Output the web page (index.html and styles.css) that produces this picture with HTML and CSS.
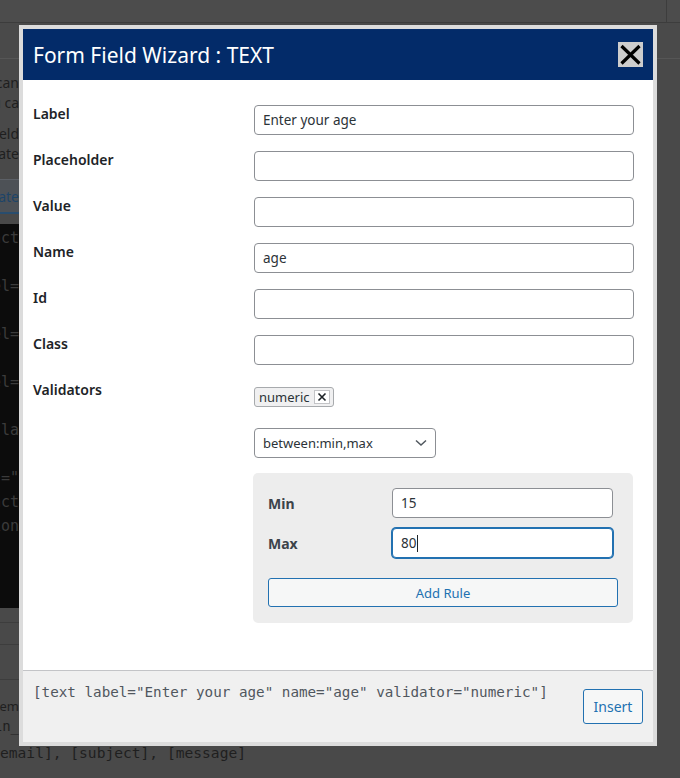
FILE: index.html
```html
<!DOCTYPE html>
<html lang="en">
<head>
<meta charset="utf-8">
<title>Form Field Wizard</title>
<link rel="stylesheet" href="styles.css">
</head>
<body>
<div class="page">
  <div class="bg-top"><div class="bg-corner"></div></div>
  <div class="bg-sub"></div>
  <div class="strip">
    <div class="s-gap g14"></div>
    <div class="s-line">Here you can</div>
    <div class="s-line">You ca</div>
    <div class="s-gap g11"></div>
    <div class="s-line">Field</div>
    <div class="s-line">Create</div>
    <div class="s-gap g15"></div>
    <div class="s-tab"><span>Create</span></div>
    <div class="s-gap g10"></div>
    <div class="s-code">
      <div class="c-line">[contact</div>
      <div class="c-line"></div>
      <div class="c-line">[text label=</div>
      <div class="c-line"></div>
      <div class="c-line">[email label=</div>
      <div class="c-line"></div>
      <div class="c-line">[text label=</div>
      <div class="c-line"></div>
      <div class="c-line">[textarea la</div>
      <div class="c-line"></div>
      <div class="c-line">[submit class="</div>
      <div class="c-line">[/contact</div>
      <div class="c-line">Submission</div>
    </div>
    <div class="s-gap g14 rule"></div>
    <div class="s-gap g21 rule"></div>
    <div class="s-gap g34 rule"></div>
    <div class="s-gap g16"></div>
    <div class="s-line small">Email item</div>
    <div class="s-line mono">admin_</div>
  </div>
  <div class="bg-bottom">email], [subject], [message]</div>
</div>

<div class="modal">
  <div class="m-header">
    <div class="m-title">Form Field Wizard : TEXT</div>
    <button class="m-close" type="button" aria-label="Close">
      <svg width="25" height="25" viewBox="0 0 25 25"><path d="M3.5 4 L21.5 21.5 M21.5 4 L3.5 21.5" stroke="#000" stroke-width="3.2" fill="none"/></svg>
    </button>
  </div>
  <div class="m-body">
    <div class="row"><div class="label">Label</div><input class="field" type="text" value="Enter your age"></div>
    <div class="row"><div class="label">Placeholder</div><input class="field" type="text" value=""></div>
    <div class="row"><div class="label">Value</div><input class="field" type="text" value=""></div>
    <div class="row"><div class="label">Name</div><input class="field" type="text" value="age"></div>
    <div class="row"><div class="label">Id</div><input class="field" type="text" value=""></div>
    <div class="row"><div class="label">Class</div><input class="field" type="text" value=""></div>
    <div class="row">
      <div class="label">Validators</div>
      <div class="vcol">
        <div class="tag"><span>numeric</span><span class="tag-x"><svg width="10" height="10" viewBox="0 0 10 10"><path d="M1.5 1.5 L8.5 8.5 M8.5 1.5 L1.5 8.5" stroke="#1d2327" stroke-width="1.6" fill="none"/></svg></span></div>
        <div class="select"><span>between:min,max</span><svg width="12" height="8" viewBox="0 0 12 8"><path d="M1 1.5 L6 6 L11 1.5" stroke="#50575e" stroke-width="1.5" fill="none"/></svg></div>
        <div class="panel">
          <div class="prow"><div class="plabel">Min</div><input class="pfield" type="text" value="15"></div>
          <div class="prow"><div class="plabel">Max</div><div class="pfield focused">80<span class="caret"></span></div></div>
          <button class="btn add" type="button">Add Rule</button>
        </div>
      </div>
    </div>
  </div>
  <div class="m-footer">
    <div class="code">[text label="Enter your age" name="age" validator="numeric"]</div>
    <button class="btn insert" type="button">Insert</button>
  </div>
</div>
</body>
</html>
```

FILE: styles.css
```css
html, body {
  margin: 0;
  padding: 0;
}
body {
  width: 680px;
  height: 778px;
  overflow: hidden;
  background: #494949;
  font-family: "Noto Sans", "Open Sans", sans-serif;
  position: relative;
}

/* ---------- dimmed background page ---------- */
.page {
  display: flex;
  flex-direction: column;
  width: 680px;
  height: 778px;
}
.bg-top {
  height: 22px;
  border-bottom: 1px solid #3c3c3c;
  background: #4c4c4c;
  display: flex;
  justify-content: flex-end;
}
.bg-corner {
  width: 14px;
  height: 24px;
  margin-top: -1px;
  border: 1px solid #3d3d3d;
  border-right: 0;
  box-sizing: border-box;
}
.bg-sub {
  height: 35px;
  border-bottom: 1px solid #565656;
  background: #4a4a4a;
}
.strip {
  width: 19px;
  height: 684px;
  overflow: hidden;
  display: flex;
  flex-direction: column;
}
.s-gap { flex: none; }
.g10 { height: 10px; }
.g11 { height: 11px; }
.g14 { height: 14px; }
.g15 { height: 15px; }
.g16 { height: 16px; }
.g21 { height: 21px; }
.g34 { height: 34px; }
.rule { border-bottom: 1px solid #3d3d3d; }
.s-line {
  flex: none;
  height: 20px;
  line-height: 20px;
  display: flex;
  justify-content: flex-end;
  white-space: nowrap;
  font-size: 14px;
  color: #1f1f1f;
}
.s-line.small { font-size: 13px; }
.s-line.mono { font-family: "DejaVu Sans Mono", monospace; font-size: 14px; }
.s-tab {
  flex: none;
  height: 35px;
  box-sizing: border-box;
  border-top: 1px solid #5c6066;
  border-bottom: 2px solid #294d6e;
  background: #4d5156;
  display: flex;
  justify-content: flex-end;
  align-items: center;
  white-space: nowrap;
  font-size: 14px;
  color: #1d4468;
}
.s-code {
  flex: none;
  height: 384px;
  box-sizing: border-box;
  padding-top: 2px;
  background: #0c0c0c;
  display: flex;
  flex-direction: column;
}
.c-line {
  height: 24px;
  line-height: 24px;
  display: flex;
  justify-content: flex-end;
  white-space: nowrap;
  font-family: "DejaVu Sans Mono", monospace;
  font-size: 15px;
  color: #3b3b3b;
}
.bg-bottom {
  height: 20px;
  line-height: 20px;
  white-space: nowrap;
  font-family: "DejaVu Sans Mono", monospace;
  font-size: 14.6px;
  color: #1f1f1f;
}

/* ---------- modal ---------- */
.modal {
  position: absolute;
  left: 19px;
  top: 25px;
  width: 638px;
  height: 721px;
  box-sizing: border-box;
  border: 4px solid #dcdcdc;
  background: #fff;
  display: flex;
  flex-direction: column;
}
.m-header {
  flex: none;
  height: 51px;
  background: #032b69;
  display: flex;
  align-items: center;
  justify-content: space-between;
  padding: 0 10px;
}
.m-title {
  color: #fff;
  font-size: 21px;
  line-height: 26px;
}
.m-close {
  width: 25px;
  height: 25px;
  padding: 0;
  border: 0;
  background: #cdcdcd;
  display: flex;
  cursor: pointer;
}
.m-body {
  flex: 1;
  padding: 25px 19px 0 10px;
  display: flex;
  flex-direction: column;
  gap: 16px;
}
.row {
  display: flex;
  align-items: flex-start;
}
.label {
  width: 221px;
  flex: none;
  font-size: 14px;
  font-weight: 600;
  line-height: 18px;
  color: #1d2327;
}
.field, .pfield {
  box-sizing: border-box;
  height: 30px;
  border: 1px solid #8c8f94;
  border-radius: 4px;
  padding: 0 8px;
  font-family: inherit;
  font-size: 13.5px;
  color: #2c3338;
  background: #fff;
  outline: none;
  margin: 0;
}
.field { width: 380px; }
.vcol {
  display: flex;
  flex-direction: column;
  align-items: flex-start;
  width: 380px;
}
.tag {
  margin-top: 6px;
  height: 20px;
  box-sizing: border-box;
  border: 1px solid #a7aaad;
  border-radius: 3px;
  background: #f0f0f1;
  padding: 0 3px 0 4px;
  display: flex;
  align-items: center;
  gap: 4px;
  font-size: 13px;
  color: #2c3338;
}
.tag-x {
  width: 16px;
  height: 14px;
  box-sizing: border-box;
  border: 1px solid #c3c4c7;
  background: #fff;
  display: flex;
  align-items: center;
  justify-content: center;
}
.select {
  margin-top: 21px;
  width: 182px;
  height: 30px;
  box-sizing: border-box;
  border: 1px solid #8c8f94;
  border-radius: 4px;
  padding: 0 8px;
  display: flex;
  align-items: center;
  justify-content: space-between;
  font-size: 13px;
  color: #2c3338;
}
.panel {
  margin-top: 15px;
  margin-left: -1px;
  width: 380px;
  box-sizing: border-box;
  background: #ededed;
  border-radius: 5px;
  padding: 15px 15px 16px 15px;
  display: flex;
  flex-direction: column;
  gap: 10px;
}
.prow {
  display: flex;
  align-items: center;
}
.plabel {
  width: 124px;
  flex: none;
  font-size: 14px;
  font-weight: 700;
  color: #3c434a;
}
.pfield { width: 221px; }
.pfield.focused {
  border-color: #2271b1;
  box-shadow: 0 0 0 1px #2271b1;
  display: flex;
  align-items: center;
}
.caret {
  display: inline-block;
  width: 1px;
  height: 17px;
  background: #1d2327;
  margin-left: 1px;
}
.btn {
  box-sizing: border-box;
  border: 1px solid #2271b1;
  border-radius: 3px;
  background: #f6f7f7;
  color: #2271b1;
  font-family: inherit;
  cursor: pointer;
  padding: 0;
}
.add {
  margin-top: 10px;
  width: 350px;
  height: 29px;
  font-size: 13px;
}
.m-footer {
  flex: none;
  height: 72px;
  box-sizing: border-box;
  border-top: 1px solid #c3c4c7;
  background: #f0f0f0;
  padding: 12px 10px 0 10px;
  display: flex;
  align-items: flex-start;
  justify-content: space-between;
}
.code {
  font-family: "DejaVu Sans Mono", monospace;
  font-size: 14.25px;
  line-height: 18px;
  color: #50575e;
  white-space: nowrap;
}
.insert {
  margin-top: 6px;
  width: 60px;
  height: 35px;
  font-size: 14px;
}
```
